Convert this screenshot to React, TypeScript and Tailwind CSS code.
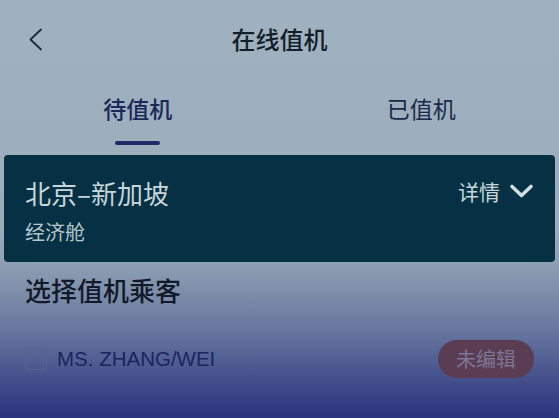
import React from 'react';

const font = { fontFamily: '"Noto Sans CJK SC", "Noto Sans", sans-serif' };

export default function App() {
  return (
    <div
      className="w-[559px] h-[418px] overflow-hidden bg-[linear-gradient(to_bottom,#a0b2bf_0%,#9badbb_55%,#8d9fb2_63%,#6a7aa0_78%,#45528c_90%,#29337e_100%)]"
      style={font}
    >
      {/* Header */}
      <div className="relative flex h-[78px] items-center justify-center">
        <svg className="absolute left-[28px] top-[28px]" width="15" height="23" viewBox="0 0 15 23" fill="none">
          <path d="M13 1.5 L2.5 11.5 L13 21.5" stroke="#1e2a38" strokeWidth="1.8" strokeLinecap="round" strokeLinejoin="round" />
        </svg>
        <span className="text-[24px] font-medium leading-[32px] text-[#141e2a]">在线值机</span>
      </div>

      {/* Tabs */}
      <div className="flex h-[77px]">
        <div className="flex flex-1 flex-col items-center pt-[14px] pr-[8px]">
          <span className="text-[23px] font-medium leading-[32px] text-[#1a285a]">待值机</span>
          <div className="mt-[17px] h-[4px] w-[45px] rounded-full bg-[#1d2b66]" />
        </div>
        <div className="flex flex-1 flex-col items-center pt-[14px]">
          <span className="text-[23px] leading-[32px] text-[#1c2a4a]">已值机</span>
        </div>
      </div>

      {/* Flight card */}
      <div className="mx-[4px] h-[107px] rounded-[4px] bg-[#063144] px-[21px] pt-[21px]">
        <div className="flex items-start justify-between">
          <span className="text-[26px] leading-[34px] text-[#c6d6da]">北京–新加坡</span>
          <div className="flex items-center gap-[9px]">
            <span className="text-[21px] leading-[30px] text-[#c6d6da]">详情</span>
            <svg width="25" height="16" viewBox="0 0 25 16" fill="none">
              <path d="M3 3.5 L12.5 12.5 L22 3.5" stroke="#d0dde1" strokeWidth="3.6" strokeLinecap="round" strokeLinejoin="round" />
            </svg>
          </div>
        </div>
        <div className="mt-[10px] text-[20px] leading-[24px] text-[#b5c6cc]">经济舱</div>
      </div>

      {/* Passenger section */}
      <div className="px-[25px] pt-[11px]">
        <div className="text-[26px] font-medium leading-[34px] text-[#121a2a]">选择值机乘客</div>
        <div className="mt-[33px] flex items-center justify-between">
          <div className="flex items-center gap-[10px]">
            <div className="h-[22px] w-[22px] rounded-[3px] border border-[#56648f]" />
            <span className="text-[20.5px] text-[#1a2560]" style={{ fontFamily: '"Liberation Sans", sans-serif' }}>
              MS. ZHANG/WEI
            </span>
          </div>
          <div className="flex h-[38px] w-[96px] items-center justify-center rounded-full bg-[#5a3d53]">
            <span className="text-[20px] text-[#7b7693]">未编辑</span>
          </div>
        </div>
      </div>
    </div>
  );
}
